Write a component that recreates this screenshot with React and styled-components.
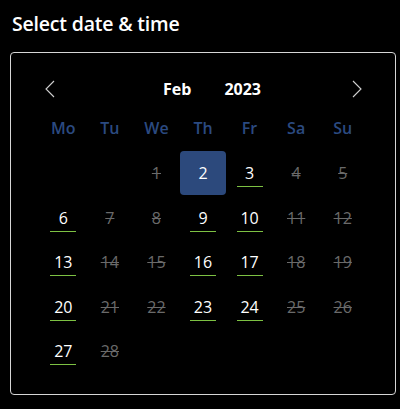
import React from 'react';
import styled, { createGlobalStyle } from 'styled-components';

const GlobalStyle = createGlobalStyle`
	html, body {
		margin: 0;
		padding: 0;
		background: #000;
	}
	body {
		font-family: 'Open Sans', 'Noto Sans', sans-serif;
		color: #fff;
	}
`;

const Page = styled.div`
	width: 400px;
	height: 409px;
	box-sizing: border-box;
	padding: 10px 4px 0 10px;
	background: #000;
`;

const Title = styled.h1`
	margin: 0 0 0 2px;
	height: 42px;
	font-size: 19.5px;
	font-weight: 600;
	line-height: 28px;
	letter-spacing: -0.2px;
	color: #fff;
`;

const Panel = styled.div`
	width: 386px;
	height: 343px;
	box-sizing: border-box;
	border: 1px solid #d6d6d6;
	border-radius: 4px;
	padding: 19px 29px 0 29px;
`;

const Header = styled.div`
	display: flex;
	align-items: center;
	height: 34px;
`;

const NavButton = styled.button`
	display: flex;
	align-items: center;
	justify-content: center;
	width: 10px;
	height: 34px;
	padding: 0;
	margin: ${(p) => (p.$side === 'left' ? '0 0 0 5px' : '0 4px 0 0')};
	border: 0;
	background: transparent;
	cursor: pointer;
`;

const MonthYear = styled.div`
	flex: 1;
	display: flex;
	justify-content: center;
	gap: 33px;
	padding-left: 17px;
	font-size: 16px;
	font-weight: 700;
	color: #fff;
`;

const Grid = styled.div`
	display: grid;
	grid-template-columns: repeat(7, 1fr);
	grid-template-rows: ${(p) => p.$rows};
	margin-top: ${(p) => p.$top || 0}px;
`;

const WeekDay = styled.div`
	display: flex;
	align-items: center;
	justify-content: center;
	font-size: 16px;
	font-weight: 600;
	color: #2b4a80;
`;

const Day = styled.div`
	position: relative;
	display: flex;
	align-items: center;
	justify-content: center;
	font-size: 16px;
	border-radius: 4px;
	color: ${(p) => (p.$off ? '#6a6a6a' : '#fff')};
	text-decoration: ${(p) => (p.$off ? 'line-through' : 'none')};
	background: ${(p) => (p.$selected ? '#2c497c' : 'transparent')};

	&::after {
		content: '';
		display: ${(p) => (p.$mark ? 'block' : 'none')};
		position: absolute;
		left: 50%;
		bottom: 8px;
		width: 26px;
		height: 1px;
		margin-left: -13px;
		background: #7dc143;
	}
`;

const Chevron = ({ dir }) => (
	<svg width="10" height="18" viewBox="0 0 10 18">
		<polyline
			points={dir === 'left' ? '9,1 1,9 9,17' : '1,1 9,9 1,17'}
			fill="none"
			stroke="#d0d0d0"
			strokeWidth="1.1"
		/>
	</svg>
);

const weekDays = ['Mo', 'Tu', 'We', 'Th', 'Fr', 'Sa', 'Su'];
const open = [3, 6, 9, 10, 13, 16, 17, 20, 23, 24, 27];
const selected = 2;

export default function App() {
	// Feb 2023 starts on a Wednesday
	const cells = [null, null];
	for (let d = 1; d <= 28; d++) cells.push(d);

	return (
		<Page>
			<GlobalStyle />
			<Title>Select date &amp; time</Title>
			<Panel>
				<Header>
					<NavButton $side="left">
						<Chevron dir="left" />
					</NavButton>
					<MonthYear>
						<span>Feb</span>
						<span>2023</span>
					</MonthYear>
					<NavButton $side="right">
						<Chevron dir="right" />
					</NavButton>
				</Header>
				<Grid $rows="44px">
					{weekDays.map((w) => (
						<WeekDay key={w}>{w}</WeekDay>
					))}
				</Grid>
				<Grid $rows="44px 45px 44px 45px 44px" $top={1}>
					{cells.map((d, i) =>
						d === null ? (
							<div key={'e' + i} />
						) : (
							<Day
								key={d}
								$selected={d === selected}
								$mark={open.includes(d)}
								$off={d !== selected && !open.includes(d)}
							>
								{d}
							</Day>
						)
					)}
				</Grid>
			</Panel>
		</Page>
	);
}
